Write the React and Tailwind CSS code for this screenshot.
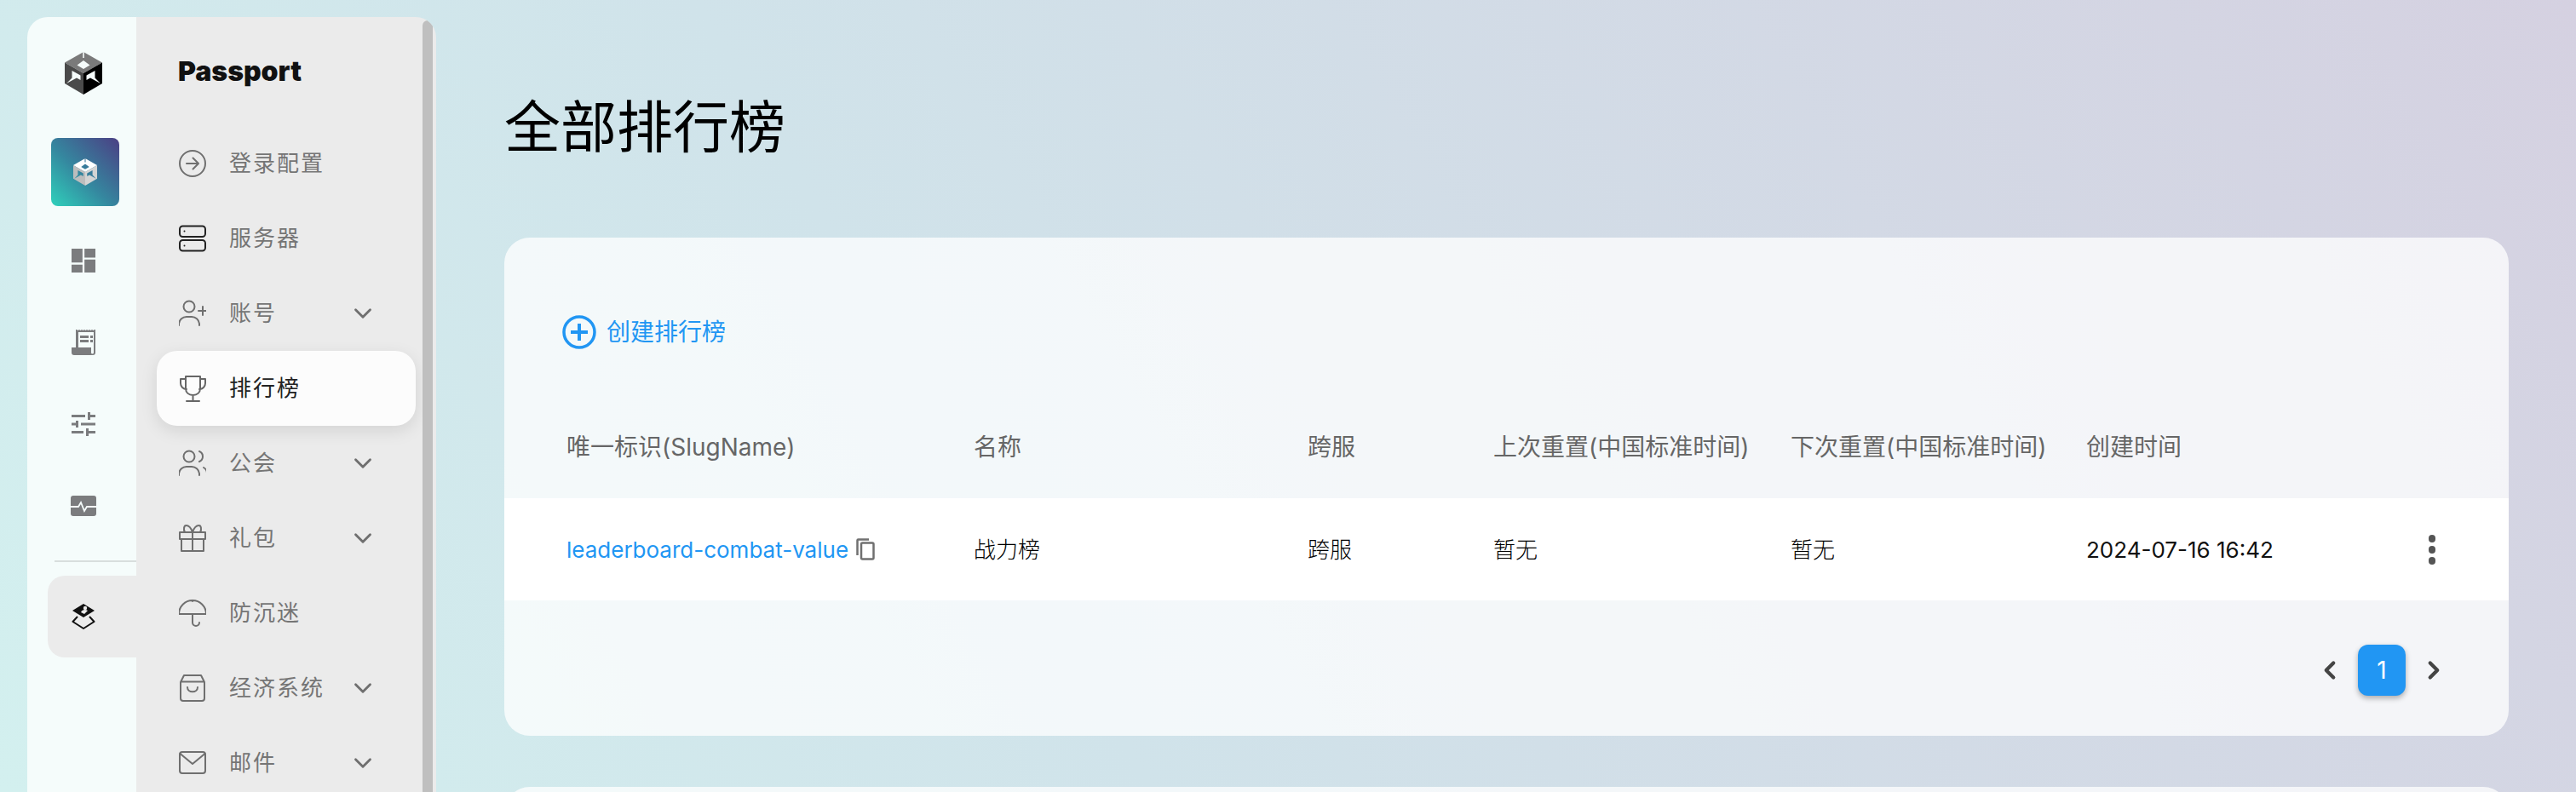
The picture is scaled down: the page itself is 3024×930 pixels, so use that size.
import { ChevronDown, ChevronLeft, ChevronRight } from "lucide-react"

function UnityLogo({ className, light }) {
  const top = light ? "#ffffff" : "#7a7a7a"
  const left = light ? "#bdbdbd" : "#4a4a4a"
  const right = light ? "#d4d4d4" : "#000000"
  return (
    <svg viewBox="0 0 44 50" className={className}>
      <mask id="unity-cut">
        <rect width="44" height="50" fill="white" />
        <path fill="black" d="M21.200 0h1.600v7h-1.600zM22 10l7.500 5.500-7.500 4.500-7.500-4.500zM8.500 22l10 5.500V33l-4.500-2.500L2 37l6.500-6.500zM35.500 22l-10 5.500V33l4.500-2.500L42 37l-6.500-6.500z" />
      </mask>
      <g mask="url(#unity-cut)">
        <path fill={top} d="M22 0l22 12.500L22 25 0 12.500z" />
        <path fill={left} d="M0 12.500 22 25v25L0 37z" />
        <path fill={right} d="M44 12.500 22 25v25l22-13z" />
      </g>
    </svg>
  )
}

function Outline({ children, className = "w-8 h-8" }) {
  return (
    <svg viewBox="0 0 32 32" fill="none" stroke="currentColor" strokeWidth="2" strokeLinecap="round" strokeLinejoin="round" className={className}>
      {children}
    </svg>
  )
}

const menu = [
  { label: "登录配置", icon: <><circle cx="16" cy="16" r="15" /><path d="M9 16h14M16.500 9.500 23 16l-6.500 6.500" /></> },
  { label: "服务器", dark: true, icon: <><rect x="1" y="1.500" width="30" height="12.500" rx="3.500" /><rect x="1" y="18" width="30" height="12.500" rx="3.500" /><circle cx="6.500" cy="7.500" r="1" fill="currentColor" stroke="none" /><circle cx="6.500" cy="24.500" r="1" fill="currentColor" stroke="none" /></> },
  { label: "账号", arrow: true, icon: <><circle cx="12" cy="8" r="6.500" /><path d="M0 30v-2a9 9 0 0 1 9-8h6a9 9 0 0 1 9 8v2M28 8v10M23 13h10" /></> },
  { label: "排行榜", active: true, icon: <><path d="M8 2h17v14c0 5-3.500 8-8.500 8S8 21 8 16zM8 5H2v5c0 4 3 7 7 7M25 5h6v5c0 4-3 7-7 7M16.500 24v7M9 31h15" /></> },
  { label: "公会", arrow: true, icon: <><circle cx="12" cy="8" r="6.500" /><path d="M0 30v-2a9 9 0 0 1 9-8h6a9 9 0 0 1 9 8v2M24 2a6.500 6.500 0 0 1 0 12M29 21a8 8 0 0 1 4 7v2" /></> },
  { label: "礼包", arrow: true, icon: <><path d="M1 9h30v8H1zM3 17h26v14H3zM16 9v22M16 9C14 3 11 1 8.500 1S5 5.500 7 9M16 9c2-6 5-8 7.500-8S27 5.500 25 9" /></> },
  { label: "防沉迷", icon: <><path d="M0 17a16 16 0 0 1 32 0zM16 1v1M16 17v10a4 4 0 0 0 8 0" /></> },
  { label: "经济系统", arrow: true, icon: <><path d="M6 1h20l4 8v19a3 3 0 0 1-3 3H5a3 3 0 0 1-3-3V9zM2.500 8.500h27M10 15c0 7 12 7 12 0" /></> },
  { label: "邮件", arrow: true, icon: <><rect x="1" y="3" width="30" height="25" rx="3" /><path d="M1.500 5 16 17 30.500 5" /></> },
]

const cols = [
  "w-[478px]",
  "w-[392px]",
  "w-[218px]",
  "w-[349px]",
  "w-[347px]",
]

export default function App() {
  return (
    <div className="h-[930px] w-[3024px] overflow-hidden flex items-start pl-[32px] pt-5 bg-[linear-gradient(60deg,#d3f0ef_0%,#d0e3ea_38%,#d5d1e1_100%)] font-[Inter,'Noto_Sans_CJK_SC',sans-serif]">
      {/* Sidebar */}
      <aside className="w-[480px] h-[910px] flex shrink-0 rounded-t-[24px] overflow-hidden">
        <div className="w-[128px] shrink-0 bg-[#f5fcfb] flex flex-col items-start pt-[41px]">
          <UnityLogo className="w-[44px] h-[50px] ml-[44px] shrink-0" />
          <div className="mt-[51px] ml-[28px] w-[80px] h-[80px] rounded-[8px] bg-[linear-gradient(45deg,#2fd1bb_0%,#35879f_45%,#4b3f84_100%)] flex items-center justify-center">
            <UnityLogo light className="w-[28px] h-[32px]" />
          </div>
          <svg viewBox="0 0 24 24" fill="#7b7c7e" className="mt-[50px] ml-[52px] w-[28px] h-[28px]">
            <path d="M0 0h11v14H0zM13 0h11v9H13zM0 16h11v8H0zM13 11h11v13H13z" />
          </svg>
          <svg viewBox="0 0 28 30" fill="#7b7c7e" className="mt-[67px] ml-[52px] w-[28px] h-[30px]">
            <path fillRule="evenodd" d="M5 0h1l1.500 1L9 0l1.500 1L12 0l1.500 1L15 0l1.500 1L18 0l1.500 1L21 0l1.500 1L24 0l1.500 1L27 0h1v27a3 3 0 0 1-3 3H3a3 3 0 0 1-3-3v-6h5zm3 3v18h15v6a1.500 1.500 0 0 0 3 0V3zm2 4h10v3H10zm12 0h3v3h-3zm-12 5h10v3H10zm12 0h3v3h-3z" />
          </svg>
          <svg viewBox="0 0 28 28" fill="#7b7c7e" className="mt-[67px] ml-[52px] w-[28px] h-[28px]">
            <path d="M0 3h16v3H0zM19 0h3v3h6v3h-6v3h-3zM0 12.500h5V10h3v8H5v-2.500H0zM11 12.500h17v3H11zM0 22h14v3H0zM17 19h3v3h8v3h-8v3h-3z" />
          </svg>
          <svg viewBox="0 0 30 24" className="mt-[70px] ml-[51px] w-[30px] h-[24px]">
            <path fill="#7b7c7e" d="M3 0h24a3 3 0 0 1 3 3v18a3 3 0 0 1-3 3H3a3 3 0 0 1-3-3V3a3 3 0 0 1 3-3z" />
            <path fill="none" stroke="#f5fcfb" strokeWidth="1.800" d="M0 13h9l3-5 4 10 3-5h11" />
          </svg>
          <div className="mt-[52px] ml-[32px] w-[96px] h-[2px] bg-[#d8dedd]" />
          <div className="mt-[16px] ml-[24px] w-[104px] h-[96px] rounded-l-[20px] bg-[#ebebeb] flex items-center pl-[28px]">
            <svg viewBox="0 0 28 30" className="w-[28px] h-[30px]">
              <path fill="#111" d="M14 0 27 8 14 16 1 8z" />
              <path fill="#ebebeb" d="M11 10c1-3 5-4 8-2l-4 4z" />
              <circle cx="16" cy="5" r="2.200" fill="#ebebeb" />
              <path fill="none" stroke="#111" strokeWidth="2" strokeLinejoin="round" d="M7 15 1.500 21 14 29l12.500-8L21 15" />
            </svg>
          </div>
        </div>
        <div className="flex-1 bg-[#ebebeb] flex min-w-0">
          <nav className="flex-1 min-w-0 pl-[24px] pr-[8px]">
            <div className="pl-[25px] pt-[42px] h-[128px] text-[32px] leading-[44px] font-black text-[#111]">Passport</div>
            {menu.map((m) => (
              <div
                key={m.label}
                className={`h-[88px] flex items-center pl-[26px] pr-[45px] ${m.active ? "bg-[#fcfcfc] rounded-[24px] shadow-[0_6px_20px_rgba(0,0,0,0.10)] text-[#222]" : "text-[#757575]"}`}
              >
                <span className={`shrink-0 mr-[27px] ${m.dark ? "text-[#222]" : m.active ? "text-[#666]" : "text-[#6f6f6f]"}`}>
                  <Outline>{m.icon}</Outline>
                </span>
                <span className="flex-1 text-[26px] tracking-[2px] leading-none">{m.label}</span>
                {m.arrow && <ChevronDown className="w-[34px] h-[34px] text-[#6f6f6f] shrink-0" strokeWidth={2} />}
              </div>
            ))}
          </nav>
          <div className="w-[12px] mt-1 mr-[4px] h-[906px] bg-[#bfbfbf] rounded-t-[8px] shrink-0" />
        </div>
      </aside>

      {/* Main */}
      <main className="flex-1 min-w-0 pl-[80px] pr-[79px]">
        <h1 className="pt-[84px] text-[66px] leading-[90px] font-normal text-black">全部排行榜</h1>
        <section className="mt-[85px] h-[585px] rounded-[30px] bg-white/75">
          <div className="h-[204px] pt-[91px] pl-[68px] flex items-start">
            <div className="flex items-center gap-[12px] h-[40px] text-[#2196f3] text-[28px]">
              <svg viewBox="0 0 40 40" fill="none" stroke="currentColor" className="w-[40px] h-[40px]">
                <circle cx="20" cy="20" r="18" strokeWidth="3.500" />
                <path d="M10 20h20M20 10v20" strokeWidth="4" />
              </svg>
              <span>创建排行榜</span>
            </div>
          </div>
          <div className="flex items-center h-[84px] mb-[18px] pl-[73px] text-[28px] text-[#666]">
            <div className={cols[0]}>唯一标识(SlugName)</div>
            <div className={cols[1]}>名称</div>
            <div className={cols[2]}>跨服</div>
            <div className={cols[3]}>上次重置(中国标准时间)</div>
            <div className={cols[4]}>下次重置(中国标准时间)</div>
            <div>创建时间</div>
          </div>
          <div className="flex items-center h-[120px] pl-[73px] bg-white/95 text-[26px] text-[#111]">
            <div className={`${cols[0]} flex items-center text-[#2196f3]`}>
              leaderboard-combat-value
              <svg viewBox="0 0 22 26" fill="none" stroke="#707070" strokeWidth="2.500" className="ml-[9px] w-[22px] h-[26px]">
                <rect x="6" y="5.500" width="14.500" height="19" rx="1.500" />
                <path d="M1.500 20V2.500c0-.600.400-1 1-1H15" />
              </svg>
            </div>
            <div className={`${cols[1]} font-light text-black`}>战力榜</div>
            <div className={`${cols[2]} font-light text-black`}>跨服</div>
            <div className={`${cols[3]} font-light text-black`}>暂无</div>
            <div className={`${cols[4]} font-light text-black`}>暂无</div>
            <div className="w-[402px]">2024-07-16 16:42</div>
            <div className="flex flex-col gap-[4px]">
              <span className="w-[8px] h-[9px] rounded-full bg-[#555]" />
              <span className="w-[8px] h-[9px] rounded-full bg-[#555]" />
              <span className="w-[8px] h-[9px] rounded-full bg-[#555]" />
            </div>
          </div>
          <div className="flex items-center justify-end pr-[71px] pt-[52px] gap-[16px] text-[#444]">
            <ChevronLeft className="w-[34px] h-[34px]" strokeWidth={3} />
            <div className="w-[56px] h-[60px] rounded-[12px] bg-[#2196f3] text-white text-[28px] flex items-center justify-center shadow-[0_3px_6px_rgba(0,0,0,0.3)]">1</div>
            <ChevronRight className="w-[34px] h-[34px]" strokeWidth={3} />
          </div>
        </section>
        <section className="mt-[60px] h-[300px] rounded-[30px] bg-white/75" />
      </main>
    </div>
  )
}
